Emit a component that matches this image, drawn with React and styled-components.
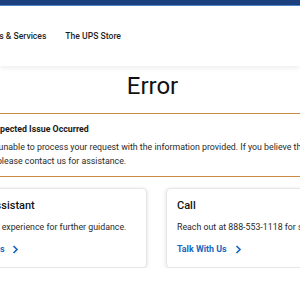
import React from 'react'
import styled, { createGlobalStyle } from 'styled-components';

const GlobalStyle = createGlobalStyle`
  html, body {
    margin: 0;
    padding: 0;
    background: #ffffff;
    overflow: hidden;
  }
  body {
    font-family: Roboto, "Liberation Sans", Arial, sans-serif;
    color: #242424;
  }
`;

const cards = [
    {
        title: 'Virtual Assistant',
        text: 'Try our chat experience for further guidance.',
        link: 'Chat With Us',
    },
    {
        title: 'Call',
        text: 'Reach out at 888-553-1118 for support.',
        link: 'Talk With Us',
    },
];

function Chevron() {
    return (
        <svg width="7" height="9" viewBox="0 0 7 9" fill="none">
            <path d="M1.5 1 L5 4.5 L1.5 8" stroke="#1767c0" strokeWidth="1.7" />
        </svg>
    )
}

function WarningIcon() {
    return (
        <svg width="16" height="16" viewBox="0 0 16 16">
            <path d="M8 1 L15 14 H1 Z" fill="#c4843c" />
            <rect x="7.3" y="5.5" width="1.4" height="5" fill="#fff" />
            <rect x="7.3" y="11.3" width="1.4" height="1.4" fill="#fff" />
        </svg>
    )
}

export default function App() {
    return (
        <>
            <GlobalStyle />
            <TopBar />
            <Header>
                <Inner>
                    <Nav>
                        <NavItem>Products &amp; Services</NavItem>
                        <NavItem>The UPS Store</NavItem>
                    </Nav>
                </Inner>
            </Header>
            <Main>
                <Title>Error</Title>
                <Alert>
                    <WarningIcon />
                    <div>
                        <AlertTitle>Unexpected Issue Occurred</AlertTitle>
                        <AlertText>
                            We're unable to process your request with the information provided. If you believe this is an
                            <br />
                            error, please contact us for assistance.
                        </AlertText>
                    </div>
                </Alert>
                <Cards>
                    {cards.map((card) => (
                        <Card key={card.title}>
                            <CardTitle>{card.title}</CardTitle>
                            <CardText>{card.text}</CardText>
                            <CardLink href="#">
                                {card.link}
                                <Chevron />
                            </CardLink>
                        </Card>
                    ))}
                </Cards>
            </Main>
        </>
    )
}

const TopBar = styled.div`
  height: 5px;
  background: #1c407e;
  border-bottom: 1px solid #4f88cc;
`;

const Header = styled.header`
  height: 60px;
  background: #fff;
  box-shadow: 0 2px 5px rgba(0, 0, 0, 0.07);
  display: flex;
  align-items: center;
`;

const Inner = styled.div`
  width: 429px;
  flex-shrink: 0;
  margin-left: -58px;
`;

const Nav = styled.nav`
  display: flex;
  gap: 19px;
  padding-left: 27px;
`;

const NavItem = styled.span`
  font-size: 8.6px;
  font-weight: 500;
  color: #1f1f1f;
  white-space: nowrap;
`;

const Main = styled.main`
  width: 429px;
  margin-left: -58px;
  padding-top: 6px;
`;

const Title = styled.h1`
  margin: 0 0 0 -8px;
  font-size: 24px;
  line-height: 28px;
  font-weight: 400;
  color: #121212;
  text-align: center;
`;

const Alert = styled.div`
  margin-top: 13px;
  border-top: 1px solid #c98a45;
  border-bottom: 1px solid #c98a45;
  padding: 8px 12px 8px;
  display: flex;
  gap: 10px;
  align-items: flex-start;
  svg {
    flex-shrink: 0;
    margin-top: -1px;
  }
`;

const AlertTitle = styled.div`
  font-size: 8.8px;
  line-height: 14px;
  font-weight: 700;
  color: #1a1a1a;
`;

const AlertText = styled.p`
  margin: 5px 0 0 -5px;
  font-size: 8.8px;
  line-height: 13.5px;
  color: #2a2a2a;
  white-space: nowrap;
`;

const Cards = styled.div`
  display: grid;
  grid-template-columns: 1fr 1fr;
  gap: 19px;
  margin-top: 11px;
`;

const Card = styled.div`
  border: 1px solid #e6e6e6;
  border-radius: 4px;
  box-shadow: 0 1px 4px rgba(0, 0, 0, 0.12);
  padding: 10px 11px 11px 10px;
  background: #fff;
`;

const CardTitle = styled.h3`
  margin: 0;
  font-size: 11px;
  line-height: 14px;
  font-weight: 500;
  color: #121212;
`;

const CardText = styled.p`
  margin: 8px 0 0;
  font-size: 8.8px;
  line-height: 13px;
  color: #2a2a2a;
  white-space: nowrap;
`;

const CardLink = styled.a`
  margin-top: 9px;
  display: flex;
  align-items: center;
  gap: 8px;
  font-size: 8.9px;
  line-height: 13px;
  font-weight: 700;
  color: #1767c0;
  text-decoration: none;
`;
